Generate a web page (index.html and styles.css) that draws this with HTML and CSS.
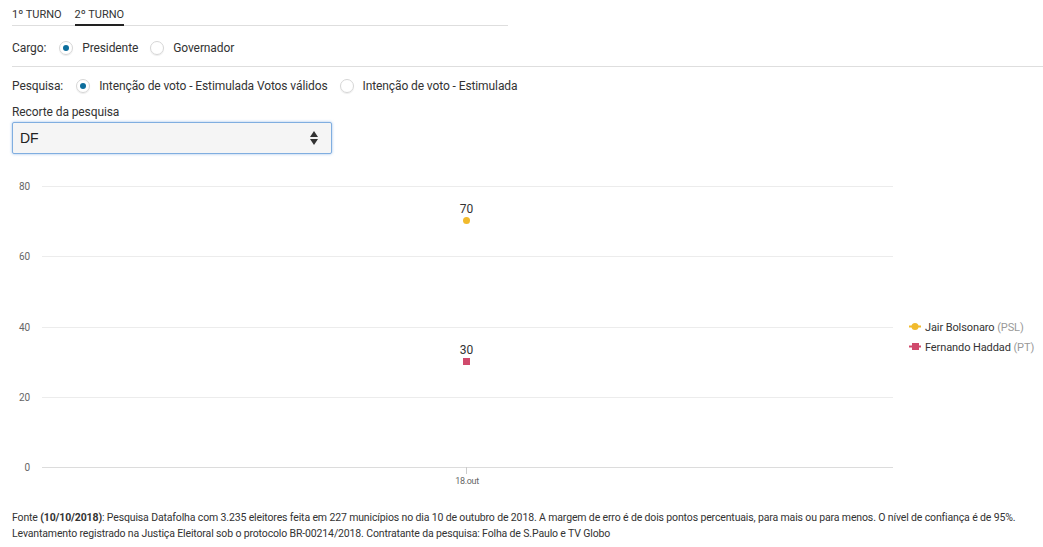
FILE: index.html
```html
<!DOCTYPE html>
<html lang="pt-BR">
<head>
<meta charset="utf-8">
<title>Pesquisa</title>
<link rel="stylesheet" href="styles.css">
</head>
<body>
<div class="page">
  <nav class="tabs">
    <span class="tab">1º TURNO</span>
    <span class="tab active">2º TURNO</span>
  </nav>

  <div class="row row-cargo">
    <span class="label">Cargo:</span>
    <span class="radio checked"></span><span class="opt">Presidente</span>
    <span class="radio"></span><span class="opt">Governador</span>
  </div>

  <div class="row row-pesquisa">
    <span class="label">Pesquisa:</span>
    <span class="radio checked"></span><span class="opt">Intenção de voto - Estimulada Votos válidos</span>
    <span class="radio"></span><span class="opt">Intenção de voto - Estimulada</span>
  </div>

  <div class="recorte-label">Recorte da pesquisa</div>
  <div class="select">
    <span class="select-value">DF</span>
    <svg class="select-arrows" width="8" height="14" viewBox="0 0 8 14"><path d="M4 0 L8 6 L0 6 Z M0 8 L8 8 L4 14 Z" fill="#333"/></svg>
  </div>

  <svg class="chart" width="1031" height="320" viewBox="12 170 1031 320">
    <g class="grid">
      <line x1="42" y1="186.5" x2="893" y2="186.5"/>
      <line x1="42" y1="256.5" x2="893" y2="256.5"/>
      <line x1="42" y1="327.5" x2="893" y2="327.5"/>
      <line x1="42" y1="397.5" x2="893" y2="397.5"/>
    </g>
    <line class="axis" x1="42" y1="467.5" x2="893" y2="467.5"/>
    <line class="tick" x1="466.5" y1="467" x2="466.5" y2="474"/>
    <g class="ylabels">
      <text x="30" y="190">80</text>
      <text x="30" y="260">60</text>
      <text x="30" y="331">40</text>
      <text x="30" y="401">20</text>
      <text x="30" y="471">0</text>
    </g>
    <text class="xlabel" x="467" y="484">18.out</text>
    <text class="val" x="466.5" y="213">70</text>
    <circle cx="466.5" cy="220.5" r="3.5" fill="#f1ba2c"/>
    <text class="val" x="466.5" y="354">30</text>
    <rect x="463" y="358" width="7" height="7" fill="#d04a6c"/>
    <g class="legend">
      <line x1="909" y1="326.5" x2="921" y2="326.5" stroke="#f1ba2c" stroke-width="2"/>
      <circle cx="915" cy="326.5" r="3.5" fill="#f1ba2c"/>
      <text x="925" y="330.5">Jair Bolsonaro <tspan class="party">(PSL)</tspan></text>
      <line x1="909" y1="346.5" x2="921" y2="346.5" stroke="#d04a6c" stroke-width="2"/>
      <rect x="912" y="343" width="7" height="7" fill="#d04a6c"/>
      <text x="925" y="350.5">Fernando Haddad <tspan class="party">(PT)</tspan></text>
    </g>
  </svg>

  <p class="fonte">Fonte <strong>(10/10/2018)</strong>: Pesquisa Datafolha com 3.235 eleitores feita em 227 municípios no dia 10 de outubro de 2018. A margem de erro é de dois pontos percentuais, para mais ou para menos. O nível de confiança é de 95%.<br>Levantamento registrado na Justiça Eleitoral sob o protocolo BR-00214/2018. Contratante da pesquisa: Folha de S.Paulo e TV Globo</p>
</div>
</body>
</html>
```

FILE: styles.css
```css
html, body {
  margin: 0;
  padding: 0;
  background: #fff;
}
body {
  font-family: Roboto, "Liberation Sans", sans-serif;
  font-size: 12px;
  letter-spacing: -0.1px;
  color: #333;
}
.page {
  padding: 0 0 0 12px;
}
.tabs {
  display: flex;
  gap: 13px;
  width: 496px;
  border-bottom: 1px solid #dedede;
  padding-top: 7px;
}
.tab {
  font-size: 11px;
  line-height: 16px;
  padding-bottom: 1px;
  color: #333;
  letter-spacing: 0;
  border-bottom: 2px solid transparent;
  margin-bottom: -1px;
}
.tab.active {
  border-bottom-color: #222;
}
.row {
  display: flex;
  align-items: center;
  height: 20px;
}
.row-cargo {
  margin-top: 12px;
  padding-bottom: 8px;
  border-bottom: 1px solid #dedede;
}
.row-pesquisa {
  margin-top: 9px;
}
.label {
  color: #333;
}
.row-cargo .label { margin-right: 13px; }
.row-pesquisa .label { margin-right: 13px; }
.radio {
  width: 12px;
  height: 12px;
  border: 1px solid #d6d6d6;
  border-radius: 50%;
  box-shadow: 0 1px 1px rgba(0,0,0,0.08);
  display: flex;
  align-items: center;
  justify-content: center;
  margin-right: 9px;
}
.radio.checked::after {
  content: "";
  width: 6px;
  height: 6px;
  border-radius: 50%;
  background: #0b6d9c;
}
.opt { margin-right: 12px; }
.recorte-label {
  margin-top: 8px;
  line-height: 16px;
}
.select {
  margin-top: 2px;
  height: 30px;
  border: 1px solid #80aee0;
  box-shadow: 0 0 3px rgba(90,150,220,0.6);
  border-radius: 2px;
  background: #f5f5f5;
  display: flex;
  align-items: center;
  justify-content: space-between;
  padding: 0 13px 0 7px;
  box-sizing: content-box;
  width: 298px;
}
.select-value {
  font-family: "Liberation Sans", Arial, sans-serif;
  font-size: 14px;
  letter-spacing: 0;
  color: #222;
}
.chart {
  display: block;
  margin-top: 16px;
}
.grid line {
  stroke: #ececec;
  stroke-width: 1;
}
.axis { stroke: #dcdcdc; stroke-width: 1; }
.tick { stroke: #ccc; stroke-width: 1; }
.ylabels text {
  font-family: Roboto, "Liberation Sans", sans-serif;
  font-size: 10px;
  fill: #666;
  text-anchor: end;
}
.xlabel {
  font-family: Roboto, "Liberation Sans", sans-serif;
  font-size: 9px;
  letter-spacing: -0.3px;
  fill: #666;
  text-anchor: middle;
}
.val {
  font-family: Roboto, "Liberation Sans", sans-serif;
  font-size: 12px;
  letter-spacing: 0;
  fill: #333;
  text-anchor: middle;
}
.legend text {
  font-family: Roboto, "Liberation Sans", sans-serif;
  font-size: 11px;
  letter-spacing: -0.1px;
  fill: #333;
}
.legend .party { fill: #999; }
.fonte {
  margin: 20px 0 0;
  font-size: 10.5px;
  letter-spacing: -0.14px;
  line-height: 16px;
  color: #333;
}
.fonte strong { font-weight: bold; }
```
